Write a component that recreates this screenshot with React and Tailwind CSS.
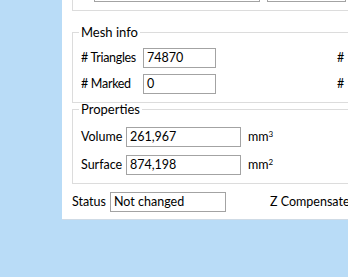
const Field = ({ value, className }) => (
  <div
    className={`h-[20px] border border-[#a3a3a3] bg-white pl-[3px] flex items-center text-[12.5px] leading-none text-black ${className}`}>
    {value}
  </div>
);

const App = () => {
  return (
    <div
      className="w-[348px] h-[277px] overflow-hidden bg-[#b9dcf7] text-black text-[12.5px]"
      style={{ fontFamily: 'Lato, "Noto Sans", sans-serif' }}>
      <div className="ml-[62px] w-[300px] h-[220px] bg-white border-b border-[#cfdbe6]">
        {/* bottom of the group above */}
        <div className="ml-[10px] h-[11px] border-l border-b border-[#dcdcdc]">
          <div className="flex h-[2px]">
            <div className="ml-[21px] w-[166px] border-x border-b border-[#a3a3a3]" />
            <div className="ml-[7px] w-[79px] border-x border-b border-[#a3a3a3]" />
          </div>
        </div>

        <fieldset className="ml-[10px] mt-[15px] border border-[#dcdcdc] pl-[8px] pt-[10px] pb-[8px]">
          <legend className="-ml-[2px] px-[2px] leading-[12px] text-[13px]">Mesh info</legend>
          <div className="flex flex-col gap-[6px]">
            <div className="flex items-center">
              <span className="w-[62px] whitespace-nowrap tracking-[-0.3px]"># Triangles</span>
              <Field value="74870" className="w-[73px]" />
              <span className="ml-[121px]">#</span>
            </div>
            <div className="flex items-center">
              <span className="w-[62px] whitespace-nowrap tracking-[-0.3px]"># Marked</span>
              <Field value="0" className="w-[73px]" />
              <span className="ml-[121px]">#</span>
            </div>
          </div>
        </fieldset>

        <fieldset className="ml-[10px] border border-[#dcdcdc] pl-[8px] pt-[12px] pb-[8px]">
          <legend className="-ml-[2px] px-[2px] leading-[12px] text-[13px]">Properties</legend>
          <div className="flex flex-col gap-[8px]">
            <div className="flex items-center">
              <span className="w-[45px]">Volume</span>
              <Field value="261,967" className="w-[115px]" />
              <span className="ml-[7px]">
                mm<sup className="text-[8px]">3</sup>
              </span>
            </div>
            <div className="flex items-center">
              <span className="w-[45px]">Surface</span>
              <Field value="874,198" className="w-[115px]" />
              <span className="ml-[7px]">
                mm<sup className="text-[8px]">2</sup>
              </span>
            </div>
          </div>
        </fieldset>

        <div className="ml-[10px] mt-[8px] flex items-center">
          <span className="w-[38px]">Status</span>
          <Field value="Not changed" className="w-[116px]" />
          <span className="ml-[44px] whitespace-nowrap">Z Compensated</span>
        </div>
      </div>
    </div>
  );
};

export default App;
